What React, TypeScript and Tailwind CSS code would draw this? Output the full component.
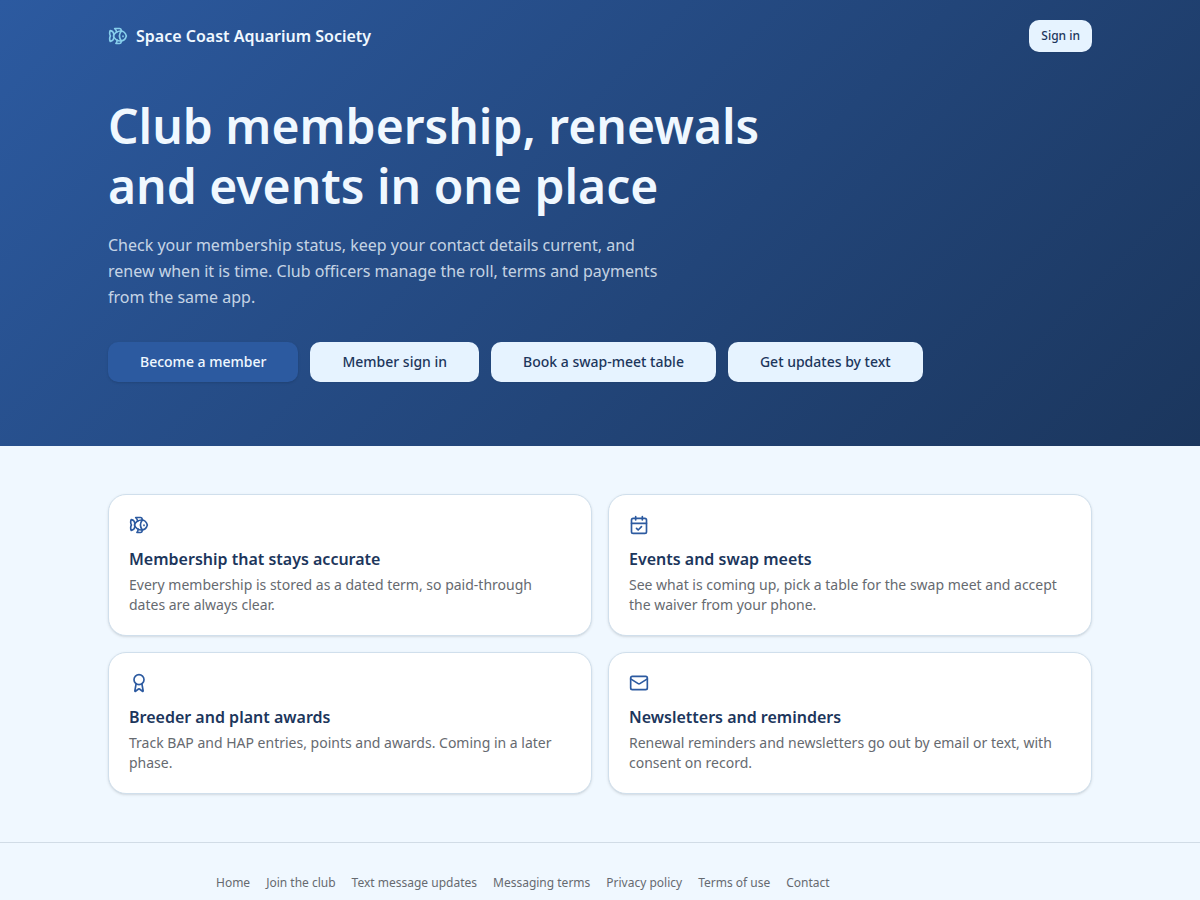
import React from 'react';
import { Award, CalendarCheck, Fish, Mail } from 'lucide-react';

const features = [
    {
        icon: Fish,
        title: 'Membership that stays accurate',
        text: 'Every membership is stored as a dated term, so paid-through dates are always clear.',
    },
    {
        icon: CalendarCheck,
        title: 'Events and swap meets',
        text: 'See what is coming up, pick a table for the swap meet and accept the waiver from your phone.',
    },
    {
        icon: Award,
        title: 'Breeder and plant awards',
        text: 'Track BAP and HAP entries, points and awards. Coming in a later phase.',
    },
    {
        icon: Mail,
        title: 'Newsletters and reminders',
        text: 'Renewal reminders and newsletters go out by email or text, with consent on record.',
    },
];

const actions = [
    { label: 'Member sign in', href: '#sign-in' },
    { label: 'Book a swap-meet table', href: '#swap-meet' },
    { label: 'Get updates by text', href: '#text-updates' },
];

const footerLinks = [
    { label: 'Home', href: '#home' },
    { label: 'Join the club', href: '#join' },
    { label: 'Text message updates', href: '#text-updates' },
    { label: 'Messaging terms', href: '#messaging-terms' },
    { label: 'Privacy policy', href: '#privacy' },
    { label: 'Terms of use', href: '#terms' },
    { label: 'Contact', href: '#contact' },
];

const App: React.FC = () => {
    return (
        <div className="min-h-screen bg-[#f0f8ff] font-['Noto_Sans',sans-serif] text-[#1c365c]">
            <div className="bg-[linear-gradient(135deg,#2c5aa0_0%,#1b365d_100%)]">
                <header className="mx-auto flex max-w-5xl items-center justify-between px-5 py-5">
                    <div className="flex items-center gap-2 text-[#f0f8ff]">
                        <Fish className="size-5 text-[#87ceeb]" aria-hidden="true" />
                        <span className="font-semibold">Space Coast Aquarium Society</span>
                    </div>
                    <a href="#sign-in" className="flex h-8 items-center rounded-[10px] bg-[#e6f3ff] px-3 text-xs font-medium shadow-xs">
                        Sign in
                    </a>
                </header>

                <section className="mx-auto max-w-5xl px-5 pt-6 pb-16">
                    <h1 className="max-w-2xl text-5xl leading-[60px] font-semibold text-[#f0f8ff]">
                        Club membership, renewals and events in one place
                    </h1>
                    <p className="mt-4 max-w-xl text-base leading-[26px] text-[#f0f8ff]/80">
                        Check your membership status, keep your contact details current, and renew when it is time. Club
                        officers manage the roll, terms and payments from the same app.
                    </p>
                    <div className="mt-8 flex flex-wrap gap-3">
                        <a href="#join" className="flex h-10 items-center rounded-[10px] bg-[#2c5aa0] px-8 text-sm font-medium text-[#f0f8ff] shadow-sm">
                            Become a member
                        </a>
                        {actions.map((action) => (
                            <a key={action.label} href={action.href} className="flex h-10 items-center rounded-[10px] bg-[#e6f3ff] px-8 text-sm font-medium shadow-xs">
                                {action.label}
                            </a>
                        ))}
                    </div>
                </section>
            </div>

            <main className="mx-auto grid max-w-5xl gap-4 px-5 py-12 sm:grid-cols-2">
                {features.map((feature) => (
                    <article key={feature.title} className="rounded-[18px] border border-[#d0dfec] bg-white p-5 shadow-sm">
                        <feature.icon className="size-5 text-[#2c5aa0]" aria-hidden="true" />
                        <h2 className="mt-3 text-base font-semibold">{feature.title}</h2>
                        <p className="mt-1 text-sm text-[#666a70]">{feature.text}</p>
                    </article>
                ))}
            </main>

            <footer className="border-t border-[#d1dce6] py-8">
                <nav className="mx-auto flex max-w-3xl flex-wrap gap-4 text-xs text-[#666a70]">
                    {footerLinks.map((link) => (
                        <a key={link.label} href={link.href}>
                            {link.label}
                        </a>
                    ))}
                </nav>
            </footer>
        </div>
    );
};

export default App;
